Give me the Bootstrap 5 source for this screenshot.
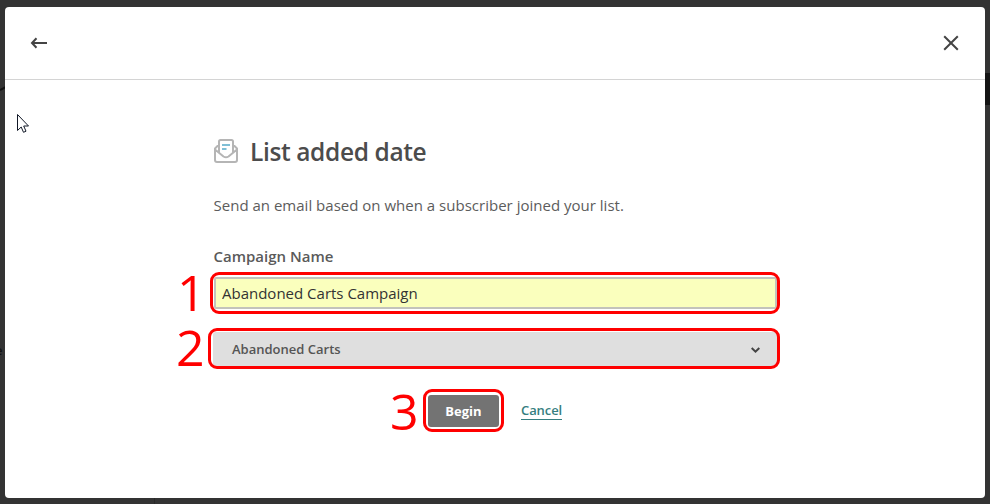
<!DOCTYPE html>
<html lang="en">
<head>
<meta charset="utf-8">
<meta name="viewport" content="width=device-width, initial-scale=1">
<title>List added date</title>
<link href="https://cdn.jsdelivr.net/npm/bootstrap@5.3.0/dist/css/bootstrap.min.css" rel="stylesheet">
<style>
body{font-family:"Open Sans","Noto Sans",sans-serif;background:#333;color:#4a4a4a;height:504px}
.backdrop-page{height:504px;padding:7px 5px 6px}
.dialog{height:491px;border-radius:4px}
.dialog-head{height:73px;border-bottom:1px solid #d4d4d4;padding:0 25px}
.plain-btn{line-height:0}
.form-col{width:564px;margin-left:208px;padding-top:54px}
.title-text{font-size:24.500px;font-weight:600;line-height:32px;padding-top:2px;color:#4c4c4c;letter-spacing:-.37px;margin-left:11px}
.intro{font-size:15px;line-height:22px;margin:26px 0 0 .5px;color:#5c5c5c;letter-spacing:.01px}
.field-label{font-size:15px;font-weight:600;line-height:22px;margin:29px 0 0 .5px;color:#5a5a5a}
.name-wrap{height:32px;margin:10px 0 0 1px}
.name-input{height:32px;border:2px solid #c3c3bb;border-radius:2px;background:#faffbd!important;font-size:15px;line-height:28px;padding:0 6px;color:#333}
.list-wrap{height:34px;margin-top:23px}
.list-select{height:34px;background:#dfdfdf;border-radius:3px;font-size:13px;font-weight:600;color:#555;padding:1px 16px 0 19px}
.actions{margin:29px 0 0 215px;height:32px}
.begin-btn{width:71px;height:32px;background:#737373;color:#fff;font-size:13px;font-weight:700;border-radius:3px;padding:1px 0 0}
.cancel-link{font-size:13px;font-weight:600;line-height:18px;color:#357e80;border-bottom:1px solid #357e80;margin:0 0 2px 22px;letter-spacing:-.08px}
/* numbered callouts over the fields */
.ring{position:absolute;border:3px solid #f00;border-radius:9px;pointer-events:none}
.ring-1{left:-4px;right:-3px;top:-5px;bottom:-5px}
.ring-2{left:-5px;right:-3px;top:-4px;bottom:-3px}
.ring-3{left:-5px;right:-5px;top:-6px;bottom:-5px}
.step{position:absolute;color:#f00;font-size:50px;line-height:50px}
.step-1{left:-37px;top:-10px}
.step-2{left:-37px;top:-10px}
.step-3{left:-38px;top:-9px}
.pointer{position:absolute;left:11px;top:106px}
.behind{position:absolute;background:#141414}
.behind-tab{right:0;top:73px;width:5px;height:32px}
.behind-mark{left:0;top:86px}
.behind-letter{left:-5px;top:341px;width:9px;overflow:hidden;background:none;color:#111;font-size:13px;font-weight:600;line-height:18px}
.behind-rule{left:154px;top:498px;width:1px;height:6px;background:#292929}
</style>
<script src="https://cdn.jsdelivr.net/npm/bootstrap@5.3.0/dist/js/bootstrap.bundle.min.js"></script>
</head>
<body class="overflow-hidden">
<div class="backdrop-page position-relative">
  <span class="behind behind-tab"></span>
  <svg class="position-absolute behind-mark" width="6" height="6" viewBox="0 0 6 6"><path d="M0 4L6 1" stroke="#111" stroke-width="2"/></svg>
  <span class="behind behind-letter">e</span>
  <span class="behind behind-rule"></span>
  <main class="dialog bg-white position-relative">
    <header class="dialog-head d-flex align-items-center justify-content-between">
      <button class="plain-btn btn p-0 border-0" aria-label="Back">
        <svg width="18" height="14" viewBox="0 0 18 14" fill="none" stroke="#444" stroke-width="2"><path d="M2 7H17M6.500 2.300L2 7L6.500 11.700"/></svg>
      </button>
      <button class="plain-btn btn p-0 border-0" aria-label="Close">
        <svg width="18" height="18" viewBox="0 0 18 18" fill="none" stroke="#444" stroke-width="2"><path d="M2.200 2.200L15.800 15.800M15.800 2.200L2.200 15.800"/></svg>
      </button>
    </header>
    <section class="form-col">
      <div class="d-flex align-items-center">
        <svg width="26" height="26" viewBox="0 0 26 26" fill="none" stroke="#b5b5b5" stroke-width="2" stroke-linejoin="round"><path d="M6 6.500L2 10.500V22a2 2 0 0 0 2 2H22a2 2 0 0 0 2-2V10.500L20 6.500M2 11.500L10.500 18.500Q13 20 15.500 18.500L24 11.500M6 14.500V3.500Q6 2 7.500 2H18.500Q20 2 20 3.500V14.500"/><path d="M9 7H17M9 11H13.500" stroke="#7fbfd6"/></svg>
        <h1 class="title-text mb-0">List added date</h1>
      </div>
      <p class="intro mb-0">Send an email based on when a subscriber joined your list.</p>
      <label class="field-label d-block" for="campaign">Campaign Name</label>
      <div class="name-wrap position-relative">
        <input id="campaign" class="name-input form-control" type="text" value="Abandoned Carts Campaign">
        <span class="ring ring-1"></span><span class="step step-1">1</span>
      </div>
      <div class="list-wrap position-relative">
        <div class="list-select d-flex align-items-center justify-content-between" role="button">
          <span>Abandoned Carts</span>
          <svg width="11" height="8" viewBox="0 0 11 8" fill="none" stroke="#444" stroke-width="2"><path d="M1.700 2L5.500 5.700L9.300 2"/></svg>
        </div>
        <span class="ring ring-2"></span><span class="step step-2">2</span>
      </div>
      <div class="actions d-flex align-items-center">
        <div class="position-relative">
          <button class="begin-btn btn border-0 d-block">Begin</button>
          <span class="ring ring-3"></span><span class="step step-3">3</span>
        </div>
        <a class="cancel-link text-decoration-none" href="#">Cancel</a>
      </div>
    </section>
    <svg class="pointer" width="14" height="21" viewBox="0 0 14 21" fill="#fff" stroke="#111827" stroke-width="1"><path d="M1.500 1.500V17.500L5.200 14L7.500 19.300L10 18.200L7.700 13H12.500Z"/></svg>
  </main>
</div>
</body>
</html>
